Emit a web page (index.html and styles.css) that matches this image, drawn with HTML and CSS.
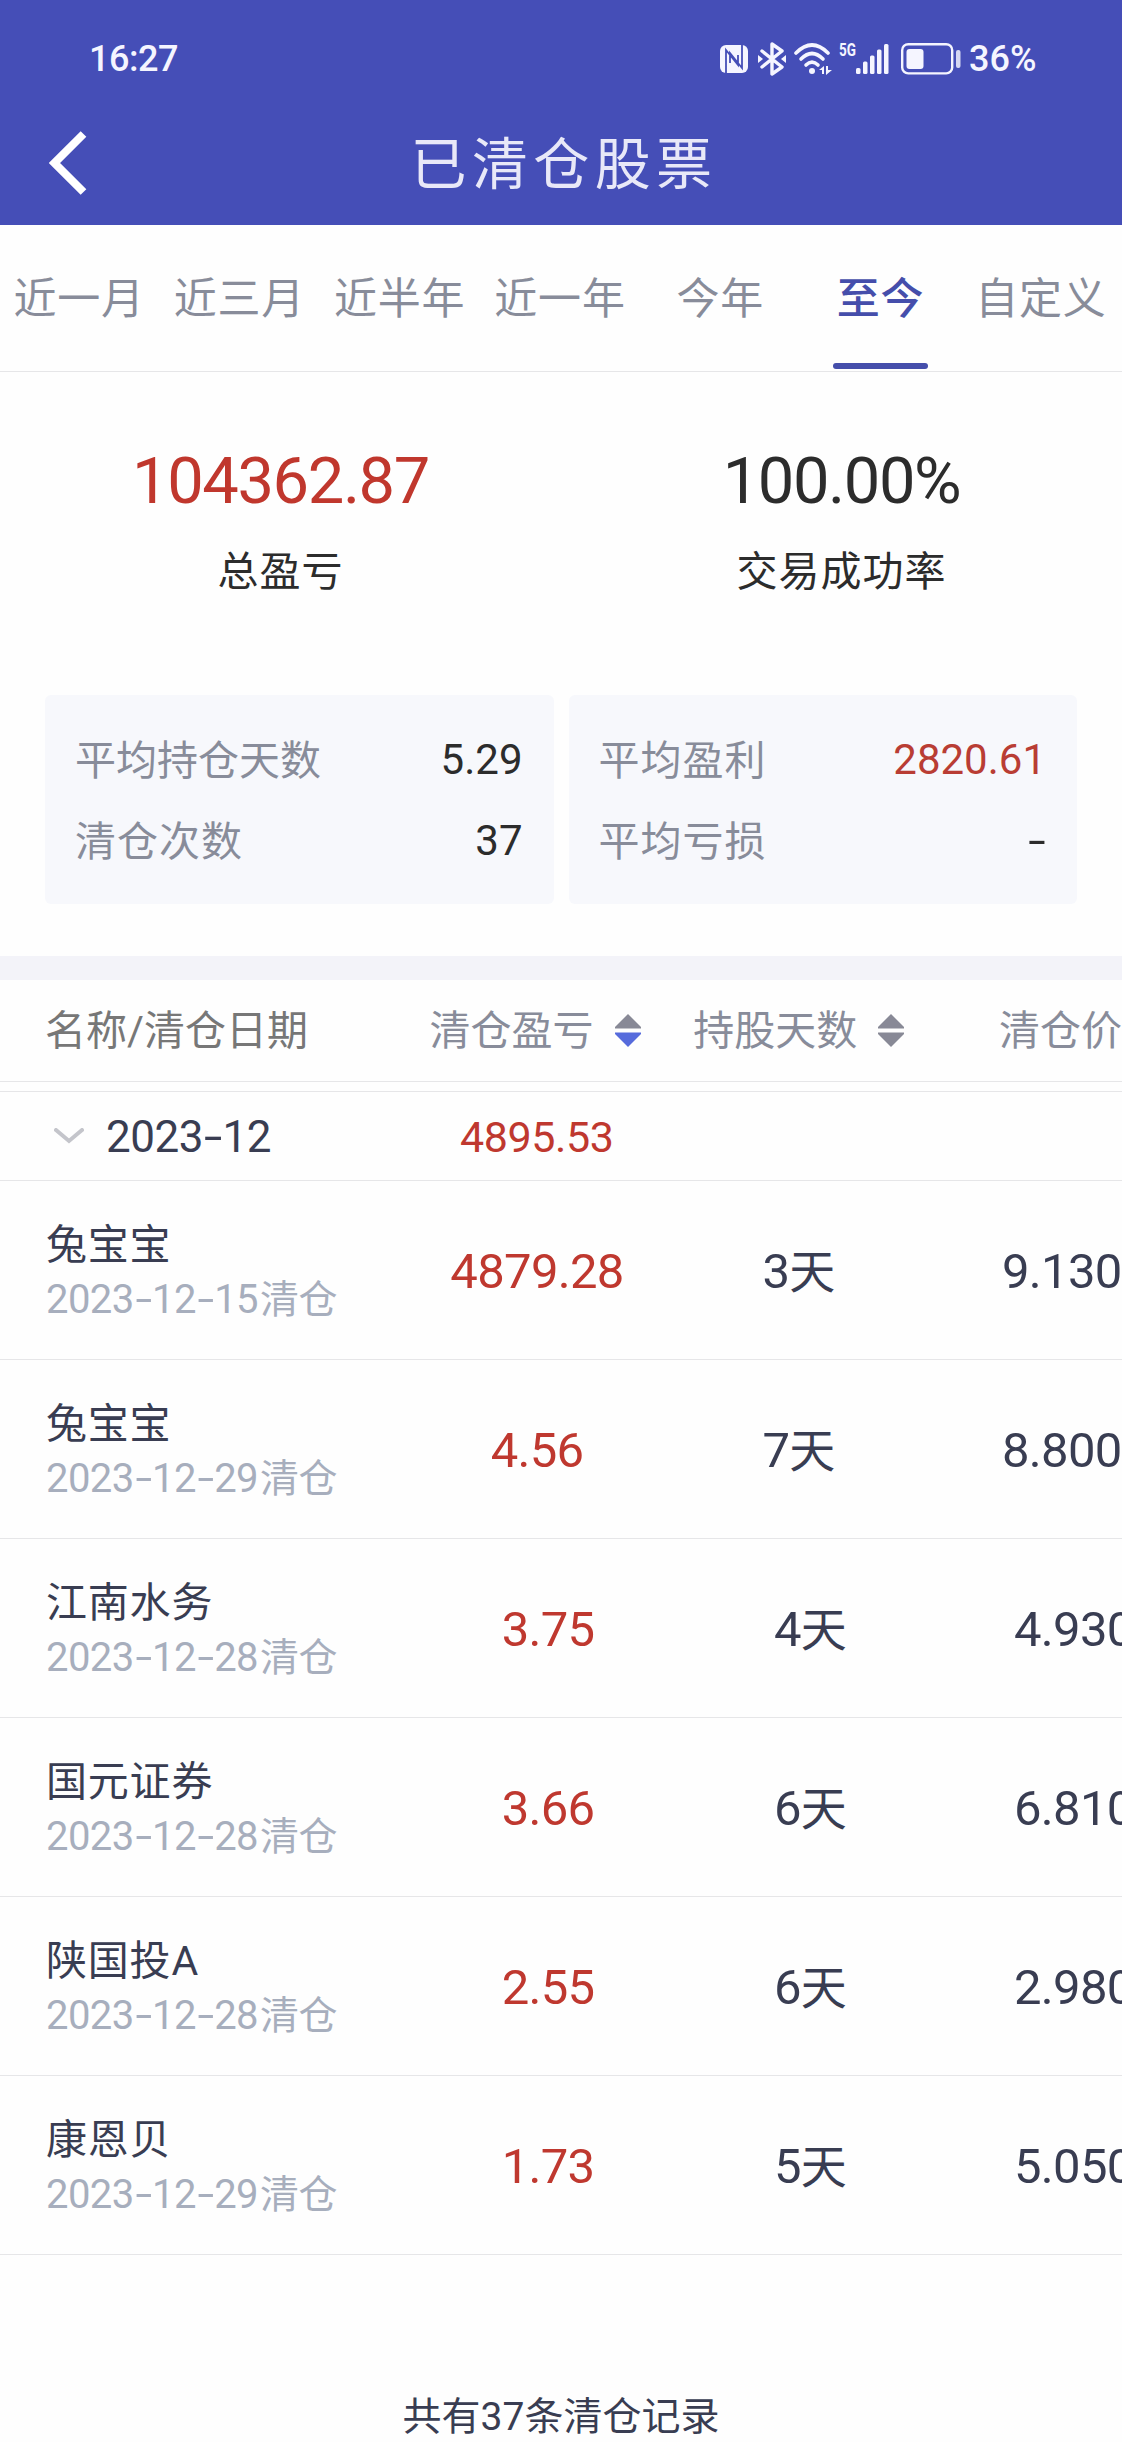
FILE: index.html
```html
<!DOCTYPE html>
<html lang="zh-CN">
<head>
    <meta charset="UTF-8">
    <meta name="viewport" content="width=device-width, initial-scale=1.0">
    <title>已清仓股票</title>
    <link rel="stylesheet" href="styles.css">
</head>
<body>
    <header class="header">
        <div class="status-bar">
            <span class="time">16:27</span>
            <div class="status-icons">
                <!-- nfc -->
                <svg class="icon-nfc" width="28" height="28" viewBox="0 0 28 28">
                    <rect width="28" height="28" rx="6" fill="#f5f5ff"/>
                    <path d="M6 28V5L18 20V10M22 0V23L10 8V18" fill="none" stroke="#454eb7" stroke-width="1.8"/>
                </svg>
                <!-- bluetooth -->
                <svg class="icon-bt" width="28" height="34" viewBox="0 0 28 34">
                    <path d="M4 9L24 25L14 32V2L24 9L4 25" fill="none" stroke="#f5f5ff" stroke-width="3.4" stroke-linejoin="round" stroke-linecap="round"/>
                    <path d="M0 13L5 17L0 21ZM28 13L23 17L28 21Z" fill="#f5f5ff"/>
                </svg>
                <!-- wifi -->
                <svg class="icon-wifi" width="38" height="32" viewBox="0 0 38 32">
                    <g fill="none" stroke="#f5f5ff" stroke-width="3.6" stroke-linecap="round">
                        <path d="M2 10Q18 -6 34 10"/>
                        <path d="M7 16Q18 5 29 16"/>
                        <path d="M12 22Q18 16 24 22"/>
                    </g>
                    <circle cx="18" cy="28" r="3" fill="#f5f5ff"/>
                    <path d="M25 27L30 23V31H28V27ZM32 23H34V27H38L32 32Z" fill="#f5f5ff"/>
                </svg>
                <span class="net">5G</span>
                <!-- signal -->
                <svg class="icon-signal" width="33" height="30" viewBox="0 0 33 30">
                    <g fill="#f5f5ff">
                        <rect x="0" y="24" width="4.5" height="6" rx="1.5"/>
                        <rect x="7" y="17.5" width="4.5" height="12.5" rx="1.5"/>
                        <rect x="14" y="11.5" width="4.5" height="18.5" rx="1.5"/>
                        <rect x="21" y="5.5" width="4.5" height="24.5" rx="1.5"/>
                        <rect x="28" y="0" width="4.5" height="30" rx="1.5"/>
                    </g>
                </svg>
                <!-- battery -->
                <svg class="icon-battery" width="60" height="32" viewBox="0 0 60 32">
                    <rect x="1.2" y="1.2" width="50" height="29.2" rx="6" fill="none" stroke="#f5f5ff" stroke-width="2.4"/>
                    <rect x="5.5" y="6" width="17" height="20" rx="3" fill="#f5f5ff"/>
                    <rect x="55" y="7" width="4.5" height="18" rx="2" fill="#d5d7f2"/>
                </svg>
                <span class="percent">36%</span>
            </div>
        </div>
        <div class="nav-bar">
            <svg class="back" width="38" height="64" viewBox="0 0 38 64">
                <path d="M34.5 3L5.5 32L34.5 61" fill="none" stroke="#fff" stroke-width="8"/>
            </svg>
            <h1>已清仓股票</h1>
        </div>
    </header>

    <nav class="tabs">
        <a class="tab">近一月</a>
        <a class="tab">近三月</a>
        <a class="tab">近半年</a>
        <a class="tab">近一年</a>
        <a class="tab">今年</a>
        <a class="tab active">至今</a>
        <a class="tab">自定义</a>
    </nav>

    <section class="summary">
        <div class="summary-item">
            <div class="summary-value red">104362.87</div>
            <div class="summary-label">总盈亏</div>
        </div>
        <div class="summary-item">
            <div class="summary-value">100.00%</div>
            <div class="summary-label">交易成功率</div>
        </div>
    </section>

    <section class="cards">
        <div class="card">
            <div class="card-row"><span>平均持仓天数</span><b>5.29</b></div>
            <div class="card-row"><span class="wide">清仓次数</span><b>37</b></div>
        </div>
        <div class="card">
            <div class="card-row"><span class="wide">平均盈利</span><b class="red">2820.61</b></div>
            <div class="card-row"><span class="wide">平均亏损</span><b class="dash">-</b></div>
        </div>
    </section>

    <section class="list">
        <div class="list-head">
            <span class="col-name">名称/清仓日期</span>
            <span class="col-profit">清仓盈亏
                <svg class="sort" width="26" height="34" viewBox="0 0 26 34">
                    <path d="M13 0L26 13V14.5H0V13Z" fill="#888996"/>
                    <path d="M0 18.5H26V20L13 33L0 20Z" fill="#566bdc"/>
                </svg>
            </span>
            <span class="col-days">持股天数
                <svg class="sort" width="26" height="34" viewBox="0 0 26 34">
                    <path d="M13 0L26 13V14.5H0V13Z" fill="#888996"/>
                    <path d="M0 18.5H26V20L13 33L0 20Z" fill="#888996"/>
                </svg>
            </span>
            <span class="col-price">清仓价</span>
        </div>

        <div class="group">
            <svg class="chevron" width="30" height="16" viewBox="0 0 30 16">
                <path d="M2 2L15 13L28 2" fill="none" stroke="#c4c5cb" stroke-width="4" stroke-linecap="round"/>
            </svg>
            <span class="month">2023<i>-</i>12</span>
            <span class="month-profit red">4895.53</span>
        </div>

        <div class="row">
            <div class="stock">
                <div class="name">兔宝宝</div>
                <div class="date">2023<i>-</i>12<i>-</i>15<em>清仓</em></div>
            </div>
            <div class="profit red">4879.28</div>
            <div class="days">3<em>天</em></div>
            <div class="price">9.130</div>
        </div>
        <div class="row">
            <div class="stock">
                <div class="name">兔宝宝</div>
                <div class="date">2023<i>-</i>12<i>-</i>29<em>清仓</em></div>
            </div>
            <div class="profit red">4.56</div>
            <div class="days">7<em>天</em></div>
            <div class="price">8.800</div>
        </div>
        <div class="row shifted">
            <div class="stock">
                <div class="name">江南水务</div>
                <div class="date">2023<i>-</i>12<i>-</i>28<em>清仓</em></div>
            </div>
            <div class="profit red">3.75</div>
            <div class="days">4<em>天</em></div>
            <div class="price">4.930</div>
        </div>
        <div class="row shifted">
            <div class="stock">
                <div class="name">国元证券</div>
                <div class="date">2023<i>-</i>12<i>-</i>28<em>清仓</em></div>
            </div>
            <div class="profit red">3.66</div>
            <div class="days">6<em>天</em></div>
            <div class="price">6.810</div>
        </div>
        <div class="row shifted">
            <div class="stock">
                <div class="name">陕国投A</div>
                <div class="date">2023<i>-</i>12<i>-</i>28<em>清仓</em></div>
            </div>
            <div class="profit red">2.55</div>
            <div class="days">6<em>天</em></div>
            <div class="price">2.980</div>
        </div>
        <div class="row shifted">
            <div class="stock">
                <div class="name">康恩贝</div>
                <div class="date">2023<i>-</i>12<i>-</i>29<em>清仓</em></div>
            </div>
            <div class="profit red">1.73</div>
            <div class="days">5<em>天</em></div>
            <div class="price">5.050</div>
        </div>
    </section>

    <footer class="total">共有37条清仓记录</footer>
</body>
</html>
```

FILE: styles.css
```css
* {
    box-sizing: border-box;
}

body {
    margin: 0;
    width: 1122px;
    height: 2442px;
    overflow: hidden;
    background-color: #fefefe;
    color: #393d52;
    font-family: Roboto, "Noto Sans CJK SC", sans-serif;
    white-space: nowrap;
}

b,
i,
em {
    font-weight: normal;
    font-style: normal;
}

.red {
    color: #bf382f;
}

/* header */
.header {
    height: 225px;
    background-color: #454eb7;
    color: #f5f5ff;
}

.status-bar {
    display: flex;
    justify-content: space-between;
    height: 116px;
    padding: 1px 80px 0 89px;
    font-size: 36px;
    font-weight: 500;
    line-height: 116px;
}

.time {
    letter-spacing: -0.5px;
}

.status-icons {
    display: flex;
    align-items: center;
}

.icon-bt {
    margin-left: 10px;
}

.icon-wifi {
    margin-left: 8px;
}

.net {
    width: 17px;
    margin: 0 0 17px 7px;
    font-size: 18px;
    font-weight: bold;
    line-height: 16px;
    transform: scaleX(0.75);
    transform-origin: left;
}

.icon-battery {
    margin-left: 12px;
}

.percent {
    width: 73px;
    margin-left: 8px;
}

.nav-bar {
    display: flex;
    align-items: center;
    height: 94px;
    padding: 0 49px;
}

h1 {
    flex: 1;
    margin: 4px 32px 0 0;
    font-size: 56px;
    font-weight: normal;
    line-height: 94px;
    letter-spacing: 5.4px;
    text-align: center;
    color: #e8e8f8;
}

/* tabs */
.tabs {
    display: flex;
    height: 147px;
    border-bottom: 1px solid #e6e6e8;
}

.tab {
    display: flex;
    flex: 1 0 0;
    flex-direction: column;
    align-items: center;
    justify-content: space-between;
    padding: 44px 2px 0 0;
    font-size: 43px;
    line-height: 60px;
    letter-spacing: 0.8px;
    color: #888c9a;
}

.active {
    font-weight: 500;
    color: #454eab;
}

.active::after {
    content: "";
    width: 95px;
    height: 6px;
    margin-bottom: 2px;
    border-radius: 3px;
    background-color: #454eab;
}

/* summary */
.summary {
    display: flex;
    height: 323px;
    padding-top: 69px;
    text-align: center;
    color: #2c2c2c;
}

.summary-item {
    flex: 1;
}

.summary-value {
    font-size: 65px;
    line-height: 80px;
    letter-spacing: -1.4px;
}

.summary-value.red {
    color: #c0372d;
}

.summary-label {
    margin-top: 21px;
    font-size: 41px;
    line-height: 60px;
    letter-spacing: 1px;
}

.cards {
    display: flex;
    gap: 15px;
    height: 261px;
    padding: 0 45px 52px;
}

.card {
    flex: 1;
    padding: 25px 31px 0 30px;
    border-radius: 6px;
    background-color: #f7f8fc;
}

.card-row {
    display: flex;
    justify-content: space-between;
    height: 81px;
    font-size: 41px;
    line-height: 82px;
    color: #888c9a;
}

.wide {
    letter-spacing: 1px;
}

.card-row b {
    font-size: 42px;
    line-height: 80px;
    color: #2c2c2c;
}

.card-row .red {
    color: #b93d34;
}

.card-row .dash {
    transform: scaleX(1.5);
    transform-origin: right;
}

/* list */
.list {
    border-top: 24px solid #f3f3f9;
}

.list-head {
    display: flex;
    align-items: center;
    height: 102px;
    padding-left: 45px;
    border-bottom: 1px solid #e6e6e8;
    font-size: 41px;
    line-height: 102px;
    color: #888c9a;
}

.col-name {
    width: 385px;
    color: #777;
}

.col-profit,
.col-days {
    display: flex;
    align-items: center;
    gap: 21px;
    width: 264px;
}

.col-days {
    width: 306px;
}

.group {
    display: flex;
    align-items: center;
    height: 90px;
    margin-top: 9px;
    padding-left: 54px;
    border-top: 1px solid #e6e6e8;
    border-bottom: 1px solid #e6e6e8;
    font-size: 43px;
    line-height: 90px;
}

.month {
    width: 354px;
    margin-left: 22px;
    padding-top: 2px;
    font-size: 44px;
    letter-spacing: -0.5px;
}

.month-profit {
    padding-top: 1px;
    letter-spacing: -0.4px;
}

.month i,
.date i {
    display: inline-block;
    margin: 0 4px;
    transform: scaleX(1.5);
}

.row {
    display: grid;
    grid-template-columns: 367px 250px 273px 1fr;
    align-items: center;
    height: 179px;
    padding: 4px 0 0 45px;
    border-bottom: 1px solid #e6e6e8;
    font-size: 49px;
    line-height: 60px;
    text-align: center;
    letter-spacing: -0.7px;
}

.shifted {
    grid-template-columns: 378px 250px 274px 1fr;
}

.stock {
    padding: 0 0 1px 1px;
    text-align: left;
    letter-spacing: 0;
}

.name {
    font-size: 41px;
    line-height: 56px;
    letter-spacing: 0.8px;
}

.date {
    font-size: 40px;
    line-height: 54px;
    letter-spacing: -0.6px;
    color: #a7aebd;
}

.date em {
    margin-left: 2px;
    font-size: 39px;
}

.days em {
    font-size: 46px;
    line-height: 1;
}

.price {
    padding-left: 67px;
    text-align: left;
}

.total {
    padding-top: 132px;
    font-size: 39px;
    line-height: 60px;
    text-align: center;
}
```
